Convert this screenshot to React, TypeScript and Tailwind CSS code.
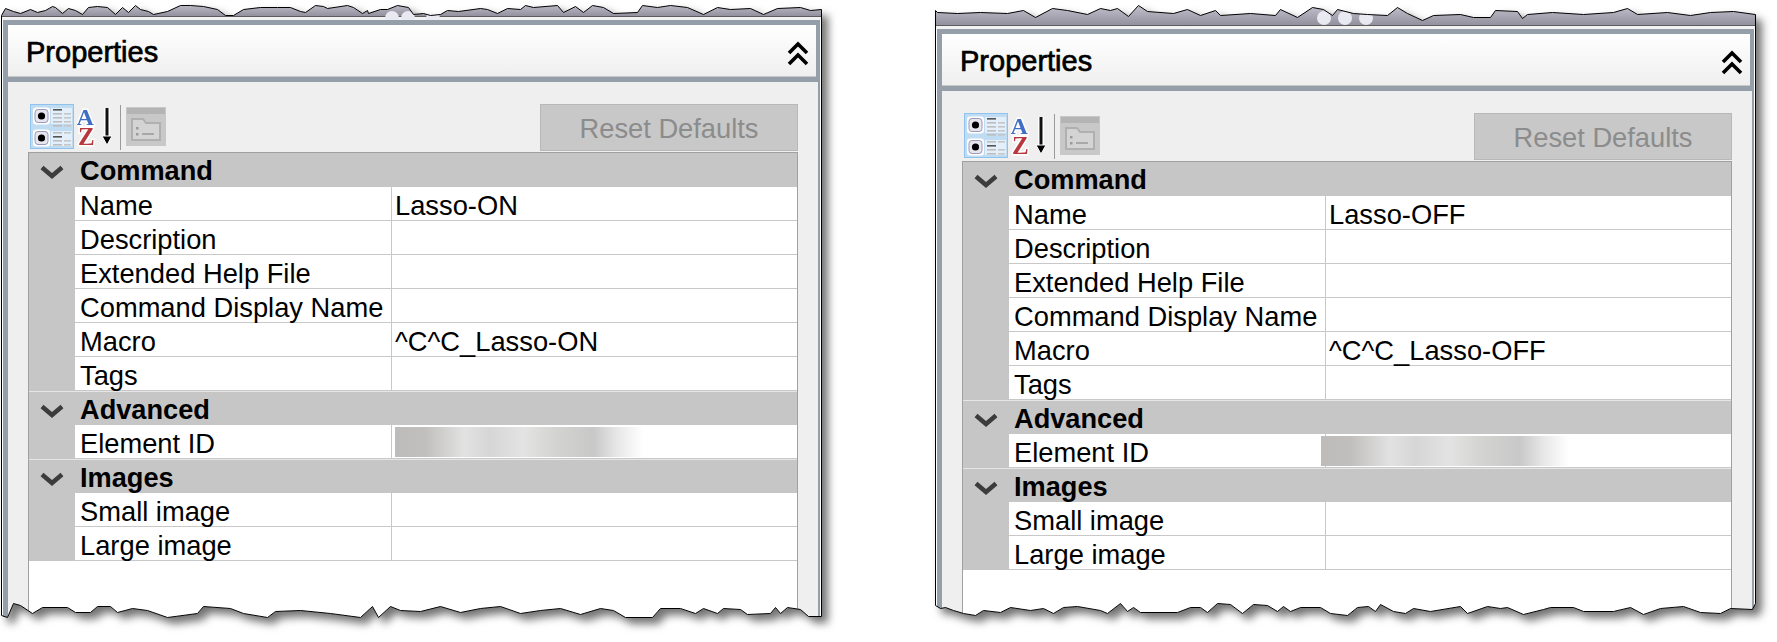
const LEFT_TOP: number[][] = [[1,15],[5,8],[13,11],[20,13],[30,9],[37,12],[45,10],[52,6],[55,7],[62,13],[68,8],[75,10],[82,14],[88,7],[97,6],[107,7],[115,14],[122,7],[128,12],[135,5],[140,9],[148,11],[153,14],[167,11],[180,5],[190,5],[203,6],[217,9],[225,15],[233,15],[243,9],[260,7],[277,7],[290,7],[300,11],[305,12],[315,5],[323,6],[327,8],[347,5],[353,7],[362,13],[367,10],[368,13],[380,9],[387,9],[397,5],[408,7],[413,14],[423,13],[430,15],[440,14],[447,10],[458,11],[480,8],[487,9],[497,13],[507,8],[520,9],[525,5],[533,7],[557,5],[563,12],[575,6],[583,12],[592,5],[603,7],[613,13],[637,12],[642,5],[657,7],[670,5],[687,7],[703,14],[717,7],[730,9],[750,8],[763,14],[777,8],[800,7],[810,10],[821,9]]
const LEFT_BOTTOM: number[][] = [[1,615],[7,617],[13,603],[20,605],[32,613],[42,607],[67,607],[75,612],[90,612],[97,606],[110,606],[117,612],[132,608],[147,610],[167,617],[197,613],[203,606],[230,608],[243,613],[267,617],[275,611],[300,610],[330,613],[360,617],[372,606],[378,617],[390,606],[400,610],[420,611],[440,606],[460,612],[480,608],[500,606],[520,613],[540,610],[560,608],[580,614],[600,608],[613,610],[625,617],[652,617],[660,608],[680,608],[695,613],[703,608],[717,613],[723,608],[740,609],[747,614],[770,613],[775,607],[780,613],[787,607],[800,609],[808,616],[821,616]]
const RIGHT_TOP: number[][] = [[935,10],[937,12],[957,13],[980,12],[1007,13],[1023,10],[1035,17],[1052,8],[1067,10],[1087,14],[1100,8],[1110,10],[1117,8],[1128,16],[1138,5],[1147,11],[1173,13],[1187,9],[1200,15],[1215,10],[1220,15],[1250,13],[1275,15],[1280,9],[1297,17],[1312,7],[1323,9],[1332,15],[1337,9],[1353,13],[1367,14],[1387,15],[1397,7],[1407,13],[1422,20],[1433,15],[1460,14],[1473,17],[1490,17],[1495,10],[1517,11],[1522,18],[1527,14],[1552,12],[1583,14],[1613,12],[1627,8],[1637,14],[1667,12],[1690,15],[1710,12],[1733,11],[1755,14]]
const RIGHT_BOTTOM: number[][] = [[935,605],[940,608],[945,607],[953,610],[963,613],[975,615],[983,610],[1000,612],[1010,607],[1030,610],[1043,608],[1053,613],[1063,607],[1077,606],[1100,610],[1107,613],[1120,603],[1127,611],[1133,607],[1140,612],[1177,612],[1190,607],[1200,607],[1207,612],[1217,603],[1230,604],[1242,613],[1253,604],[1267,605],[1277,611],[1283,606],[1290,611],[1300,607],[1320,607],[1330,613],[1347,615],[1357,607],[1368,606],[1375,611],[1380,604],[1393,611],[1405,613],[1413,608],[1430,611],[1460,606],[1467,613],[1487,606],[1500,608],[1507,607],[1523,614],[1543,609],[1550,607],[1573,607],[1583,611],[1613,611],[1630,607],[1643,614],[1660,608],[1683,606],[1700,612],[1720,613],[1730,608],[1752,609],[1755,603]]

function Chevron() {
  return (
    <svg width="24" height="14" viewBox="0 0 24 14" className="mt-[12px] ml-[11px]">
      <path d="M2 2.5 L12 11 L22 2.5" fill="none" stroke="#3c3c3c" strokeWidth="4.5" />
    </svg>
  )
}

function CategorizedIcon() {
  const rows = [5, 9, 13, 17, 21, 28, 32, 36, 40]
  return (
    <svg width="44" height="45" viewBox="0 0 44 45">
      <rect x="0.5" y="0.5" width="43" height="44" fill="#c0dcf3" stroke="#8fc3ee" />
      {[11.5, 33.5].map((cy) => (
        <g key={cy}>
          <rect x="3" y={cy - 8} width="17" height="17" rx="3" fill="#fff" />
          <rect x="5" y={cy - 6} width="13" height="13" rx="3" fill="#e6e6ee" stroke="#9c98b8" />
          <circle cx="11.5" cy={cy + 0.5} r="3.6" fill="#000" />
        </g>
      ))}
      <rect x="21" y="4" width="21" height="16" fill="#fff" opacity="0.55" />
      <rect x="21" y="27" width="21" height="15" fill="#fff" opacity="0.55" />
      {rows.map((y, i) => {
        const head = i === 0 || i === 6
        return (
          <g key={y}>
            <rect x="23" y={y} width="9" height="1.6" fill={head ? '#555' : '#bdbdbd'} />
            {!head && <rect x="34" y={y} width="7" height="1.6" fill="#c6c6c6" />}
          </g>
        )
      })}
    </svg>
  )
}

function SortIcon() {
  return (
    <svg width="42" height="45" viewBox="0 0 42 45" className="[font-family:'Liberation_Serif',serif] font-bold">
      <text x="-0.5" y="21" fontSize="24" fill="#3f6fc4" stroke="#fff" strokeWidth="3" paintOrder="stroke">A</text>
      <text x="1" y="41" fontSize="25" fill="#b8373f" stroke="#fff" strokeWidth="3" paintOrder="stroke">Z</text>
      <path d="M30 4 V35" stroke="#fff" strokeWidth="6" />
      <path d="M30 4 V35" stroke="#111" strokeWidth="3" />
      <path d="M25 32 L35 32 L30 41 Z" fill="#000" stroke="#fff" strokeWidth="1" />
    </svg>
  )
}

function PagesIcon() {
  return (
    <svg width="40" height="39" viewBox="0 0 40 39" className="blur-[0.6px]">
      <rect x="0" y="0" width="40" height="39" fill="#c8c8c8" />
      <rect x="1" y="1" width="38" height="6" fill="#b4b4b4" />
      <path d="M6 33 V12 H17 L20 16 H34 V33 Z" fill="#d4d4d4" stroke="#b0b0b0" strokeWidth="2" />
      <rect x="10" y="20" width="2.5" height="2.5" fill="#9a9a9a" />
      <rect x="10" y="26" width="2.5" height="2.5" fill="#9a9a9a" />
      <rect x="16" y="26" width="12" height="2" fill="#a8a8a8" />
    </svg>
  )
}

function SectionRow({ label, first }: { label: string; first?: boolean }) {
  return (
    <div className={`flex h-[34px] bg-[#c6c6c6] ${first ? '' : 'border-t border-[#e6e6e6]'}`}>
      <div className="w-[46px] shrink-0"><Chevron /></div>
      <span className="pl-[5px] text-[27.2px] font-bold leading-[36px] text-black">{label}</span>
    </div>
  )
}

function PropRow({ label, value, blurClass }: { label: string; value?: string; blurClass?: string }) {
  return (
    <div className="flex h-[34px] bg-[#c6c6c6]">
      <div className="w-[46px] shrink-0" />
      <div className="flex flex-1 bg-white border-b border-[#c8c8c8]">
        <div className="w-[317px] shrink-0 border-r border-[#c8c8c8] pl-[5px] text-[27.3px] leading-[37px] text-black">{label}</div>
        <div className="flex-1 pl-[3px] text-[27.3px] leading-[37px] text-black">
          {blurClass ? (
            <div className={`relative mt-[2px] h-[30px] w-[248px] bg-[linear-gradient(90deg,#bdbcba_0%,#c0bfbd_12%,#e2e2e2_28%,#d6d6d6_38%,#e3e3e3_52%,#d4d4d2_64%,#c8c8c8_80%,#e8e8e8_90%,#ffffff_100%)] ${blurClass}`} />
          ) : value}
        </div>
      </div>
    </div>
  )
}

function Panel({ macro, name, stripHeight, originX, top, bottom, dots, blurClass }: {
  macro: string
  name: string
  stripHeight: number
  originX: number
  top: number[][]
  bottom: number[][]
  dots: number[]
  blurClass: string
}) {
  const outline = [...top, ...[...bottom].reverse()].map(([x, y]) => [x - originX, y])
  const polygon = outline.map(([x, y]) => `${x + 0.5}px ${y + 0.5}px`).join(',')
  const path = outline.map(([x, y]) => `${x + 0.5},${y + 0.5}`).join(' ')

  return (
    <div className="relative h-[642px] w-[821px] shrink-0 drop-shadow-[6px_6px_4px_rgba(0,0,0,0.55)]">
      <div className="flex h-full flex-col bg-white pl-[2px] pr-[2px]" style={{ clipPath: `polygon(${polygon})` }}>
        <div className="relative -ml-[2px] -mr-[2px] shrink-0 overflow-hidden bg-[#f2f2f2] pb-[3px]" style={{ height: stripHeight }}>
          <div className="h-full border-b border-[#5c5c5c] bg-gradient-to-b from-[#d0cedb] to-[#93919e]" />
          {dots.map((x) => (
            <span key={x} className="absolute top-[11px] h-[14px] w-[14px] rounded-full bg-[#e9e9f1]" style={{ left: x - originX - 7 }} />
          ))}
        </div>
        <div className="flex flex-1 flex-col border-l-[5px] border-t-[5px] border-r-[2px] border-[#949faa] bg-[#949faa]">
          <div className="mr-[2px] flex h-[52px] items-center justify-between border-b border-[#c8c8c8] bg-gradient-to-b from-white to-[#efefef] pl-[18px] pr-[7px]">
            <span className="mt-[4px] text-[29px] leading-none text-black [-webkit-text-stroke:0.7px_black]">Properties</span>
            <svg width="22" height="25" viewBox="0 0 22 25" className="mt-[6px]">
              <path d="M2 12 L11 3 L20 12 M2 23 L11 14 L20 23" fill="none" stroke="#000" strokeWidth="3.6" />
            </svg>
          </div>
          <div className="mt-[5px] flex flex-1 flex-col bg-[#efefef] px-[20px] pt-[22px]">
            <div className="flex h-[48px] shrink-0 items-start justify-between">
              <div className="ml-[2px] flex items-start">
                <CategorizedIcon />
                <div className="ml-[3px]"><SortIcon /></div>
                <div className="ml-[1px] mt-px h-[45px] w-px shrink-0 bg-[#9a9a9a]" />
                <div className="ml-[5px] mt-[3px]"><PagesIcon /></div>
              </div>
              <button className="h-[47px] w-[258px] border border-[#b8b8b8] bg-[#c8c8c8] pt-[3px] text-[27.3px] text-[#8c8c8c]">Reset Defaults</button>
            </div>
            <div className="flex-1 border-x border-t border-[#a0a0a0] bg-white">
              <SectionRow label="Command" first />
              <PropRow label="Name" value={name} />
              <PropRow label="Description" />
              <PropRow label="Extended Help File" />
              <PropRow label="Command Display Name" />
              <PropRow label="Macro" value={macro} />
              <PropRow label="Tags" />
              <SectionRow label="Advanced" />
              <PropRow label="Element ID" blurClass={blurClass} />
              <SectionRow label="Images" />
              <PropRow label="Small image" />
              <PropRow label="Large image" />
            </div>
          </div>
        </div>
      </div>
      <svg width="821" height="642" className="pointer-events-none absolute inset-0">
        <polygon points={path} fill="none" stroke="#000" strokeWidth="1" />
      </svg>
    </div>
  )
}

export default function App() {
  return (
    <div className="flex h-[642px] w-[1777px] gap-[113px] overflow-hidden bg-white pl-[1px] [font-family:'Liberation_Sans',Arial,sans-serif]">
      <Panel name="Lasso-ON" macro="^C^C_Lasso-ON" stripHeight={20} originX={1} top={LEFT_TOP} bottom={LEFT_BOTTOM} dots={[392, 408, 433]} blurClass="ml-0" />
      <Panel name="Lasso-OFF" macro="^C^C_Lasso-OFF" stripHeight={29} originX={935} top={RIGHT_TOP} bottom={RIGHT_BOTTOM} dots={[1324, 1345, 1366]} blurClass="-ml-[8px]" />
    </div>
  )
}
